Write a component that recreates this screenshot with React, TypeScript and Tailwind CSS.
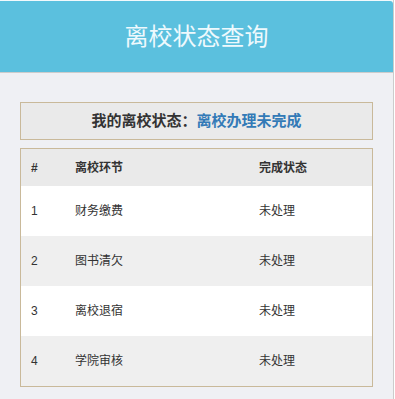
import React from 'react';

const steps = [
  { id: 1, name: '财务缴费', status: '未处理' },
  { id: 2, name: '图书清欠', status: '未处理' },
  { id: 3, name: '离校退宿', status: '未处理' },
  { id: 4, name: '学院审核', status: '未处理' },
];

const font = { fontFamily: '"Liberation Sans", "Noto Sans CJK SC", sans-serif' };

const App: React.FC = () => {
  return (
    <div className="w-[394px] h-[399px] bg-[#eff0f4] border-r border-[#cccccc]" style={font}>
      <div className="h-[73px] pt-px bg-[#f2f9fc]">
        <div className="h-[71px] bg-[#5bc0de] rounded-tr-[3px] flex items-center justify-center">
          <h1 className="text-[24px] text-[#eef9fd] font-normal leading-none">离校状态查询</h1>
        </div>
        <div className="h-px bg-[#cccccc]" />
      </div>

      <div className="px-5 pt-[29px]">
        <div className="h-[38px] border border-[#c9b99a] bg-[#eaeaea] flex items-center justify-center text-[15px] font-bold">
          <span className="text-[#333333]">我的离校状态：</span>
          <span className="text-[#337ab7]">离校办理未完成</span>
        </div>

        <div className="mt-2 border border-[#c9b99a]">
          <div className="h-[37px] bg-[#eaeaea] flex items-center text-[12px] font-bold text-[#333333]">
            <div className="w-[54px] pl-[10px]">#</div>
            <div className="w-[184px]">离校环节</div>
            <div className="flex-1">完成状态</div>
          </div>
          {steps.map((s, i) => (
            <div
              key={s.id}
              className={`h-[50px] flex items-center text-[12px] text-[#333333] ${i % 2 === 1 ? 'bg-[#efefef]' : 'bg-white'}`}
            >
              <div className="w-[54px] pl-[10px]">{s.id}</div>
              <div className="w-[184px]">{s.name}</div>
              <div className="flex-1">{s.status}</div>
            </div>
          ))}
        </div>
      </div>
    </div>
  );
};

export default App;
